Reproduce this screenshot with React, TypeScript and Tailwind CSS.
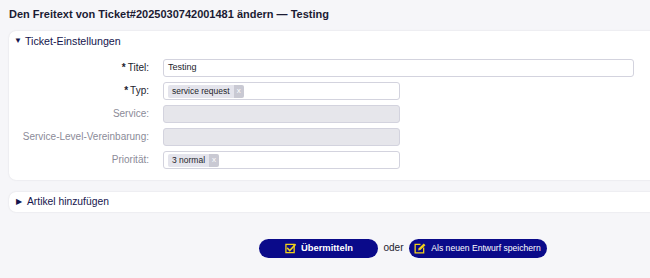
import React from "react";

const font = "font-['Liberation_Sans',Arial,sans-serif]";

function Chip({ label }: { label: string }) {
  return (
    <span className="inline-flex items-stretch h-[13px] ml-[4px]">
      <span className="bg-[#e4e4ec] text-[#1e1e2a] text-[8.5px] leading-[13px] px-[4px] rounded-l-[2px]">{label}</span>
      <span className="bg-[#c9c9d3] text-white text-[8px] leading-[12px] px-[3px] rounded-r-[2px]">x</span>
    </span>
  );
}

function Row({
  label,
  required,
  muted,
  children,
  wide,
  disabled,
}: {
  label: string;
  required?: boolean;
  muted?: boolean;
  children?: React.ReactNode;
  wide?: boolean;
  disabled?: boolean;
}) {
  return (
    <div className="flex items-center h-[18px]">
      <div
        className={`w-[140px] text-right text-[10px] leading-[14px] ${
          muted ? "text-[#8b8b98]" : "text-[#22222e]"
        }`}
      >
        {required && <span className="font-bold mr-[2px]">*</span>}
        {label}
      </div>
      <div
        className={`ml-[14px] h-[18px] rounded-[3px] border border-[#d3d3de] flex items-center ${
          wide ? "w-[471px]" : "w-[237px]"
        } ${disabled ? "bg-[#e6e6eb]" : "bg-white"}`}
      >
        {children}
      </div>
    </div>
  );
}

function CheckIcon() {
  return (
    <svg width="11" height="11" viewBox="0 0 12 12" fill="none">
      <rect x="1" y="1.5" width="9" height="9" stroke="#f2d21b" strokeWidth="1.4" />
      <path d="M3 6l2.2 2.2L11 2" stroke="#f2d21b" strokeWidth="1.8" strokeLinecap="square" />
    </svg>
  );
}

function EditIcon() {
  return (
    <svg width="12" height="11" viewBox="0 0 13 12" fill="none">
      <path d="M7 1.5H1.2v9.3h9.3V5" stroke="#f2d21b" strokeWidth="1.4" />
      <path d="M4.5 8.2l.6-2.4L10.6.6l1.8 1.8-5.5 5.2z" fill="#f2d21b" />
    </svg>
  );
}

export default function App() {
  return (
    <div className={`w-[650px] h-[278px] overflow-hidden bg-[#f6f6f9] ${font}`}>
      <div className="pt-[8px] pl-[9px] h-[20px] text-[11px] leading-[12px] font-bold text-[#1b1b33]">
        Den Freitext von Ticket#2025030742001481 ändern — Testing
      </div>

      <div className="mt-[11px] ml-[9px] mr-[-20px] bg-white rounded-[7px] shadow-[0_0_2px_rgba(0,0,40,0.12)] pb-[11px]">
        <div className="h-[20px] flex items-center pl-[5px] text-[10.7px] text-[#15154d]">
          <span className="text-[8px] mr-[3px]">▼</span>
          Ticket-Einstellungen
        </div>
        <div className="mt-[8px] flex flex-col gap-[5px]">
          <Row label="Titel:" required wide>
            <span className="pl-[4px] text-[9px] text-[#1b1b2b]">Testing</span>
          </Row>
          <Row label="Typ:" required>
            <Chip label="service request" />
          </Row>
          <Row label="Service:" muted disabled />
          <Row label="Service-Level-Vereinbarung:" muted disabled />
          <Row label="Priorität:" muted>
            <Chip label="3 normal" />
          </Row>
        </div>
      </div>

      <div className="mt-[12px] ml-[9px] mr-[-20px] h-[20px] bg-white rounded-[7px] shadow-[0_0_2px_rgba(0,0,40,0.12)] flex items-center pl-[7px] text-[10.3px] text-[#15154d]">
        <span className="text-[8px] mr-[5px]">▶</span>
        Artikel hinzufügen
      </div>

      <div className="mt-[27px] ml-[163px] w-[480px] flex justify-center items-center">
        <button className="w-[119px] h-[19px] rounded-full bg-[#0a0a8a] text-white text-[9.4px] font-bold flex items-center justify-center gap-[5px]">
          <CheckIcon />
          Übermitteln
        </button>
        <span className="mx-[5px] text-[10px] text-[#22222e] -mt-[3px]">oder</span>
        <button className="w-[138px] h-[19px] rounded-full bg-[#0a0a8a] text-white text-[8.6px] flex items-center justify-center gap-[5px] whitespace-nowrap">
          <EditIcon />
          Als neuen Entwurf speichern
        </button>
      </div>
    </div>
  );
}
